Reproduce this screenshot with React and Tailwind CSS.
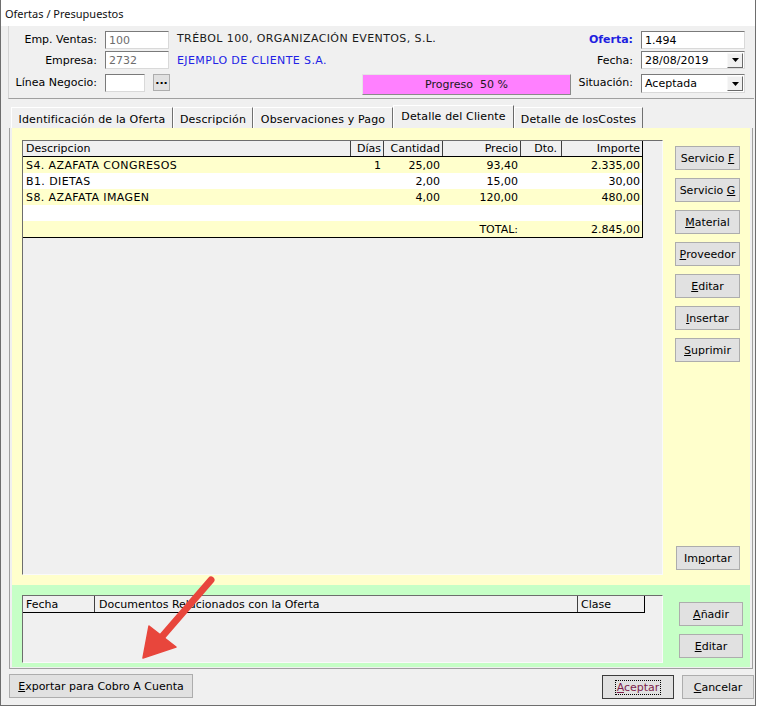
import React from "react";

const Btn = ({ className = "", children }) => (
  <div className={`shrink-0 flex items-center justify-center bg-[#e1e1e1] border border-[#adadad] text-black whitespace-nowrap ${className}`}>
    {children}
  </div>
);

const Field = ({ className = "", children }) => (
  <div className={`shrink-0 bg-white border border-t-[#7a7a7a] border-l-[#7a7a7a] border-r-[#d9d9d9] border-b-[#d9d9d9] flex items-center pl-[3px] ${className}`}>
    {children}
  </div>
);

const Combo = ({ className = "", value }) => (
  <div className={`shrink-0 bg-white border border-t-[#7a7a7a] border-l-[#7a7a7a] border-r-[#d9d9d9] border-b-[#d9d9d9] flex items-center ${className}`}>
    <span className="flex-1 pl-[3px]">{value}</span>
    <div className="w-[16px] h-[15px] mr-[1px] bg-[#f0f0f0] border border-t-[#f8f8f8] border-l-[#f8f8f8] border-r-[#696969] border-b-[#696969] flex items-center justify-center">
      <svg width="7" height="4" viewBox="0 0 7 4">
        <polygon points="0,0 7,0 3.5,4" fill="#000" />
      </svg>
    </div>
  </div>
);

const rows = [
  { d: "S4. AZAFATA CONGRESOS", dias: "1", cant: "25,00", precio: "93,40", imp: "2.335,00" },
  { d: "B1. DIETAS", cant: "2,00", precio: "15,00", imp: "30,00" },
  { d: "S8. AZAFATA IMAGEN", cant: "4,00", precio: "120,00", imp: "480,00" },
  {},
  { precio: "TOTAL:", imp: "2.845,00" },
];

export default function App() {
  return (
    <div className="relative w-[760px] h-[708px] bg-white overflow-hidden font-['DejaVu_Sans',sans-serif] text-[11px] leading-none text-black">
      <div className="w-[756px] h-[706px] flex flex-col border-l border-r border-b border-[#6e6e6e] bg-[#f0f0f0]">
        {/* title bar */}
        <div className="h-[26px] shrink-0 bg-white flex items-center pl-[4px] font-['Noto_Sans',sans-serif] text-[11px] text-[#111]">
          Ofertas / Presupuestos
        </div>

        {/* header panel */}
        <div className="h-[73px] shrink-0 ml-[7px] mr-[1px] border-l border-l-[#d4d4d4] border-b border-b-[#a0a0a0] pt-[5px] pr-[9px] flex flex-col">
          <div className="flex items-center h-[18px]">
            <span className="shrink-0 w-[88px] text-right pb-[2px]">Emp. Ventas:</span>
            <Field className="ml-[8px] w-[64px] h-[18px] text-[#6d6d6d]">100</Field>
            <span className="shrink-0 ml-[8px] text-[#1a1a1a] tracking-[0.4px] pb-[3px]">TRÉBOL 100, ORGANIZACIÓN EVENTOS, S.L.</span>
            <div className="ml-auto flex items-center shrink-0">
              <span className="w-[60px] text-right font-bold text-[#1f1fe0] pb-[2px]">Oferta:</span>
              <Field className="ml-[8px] w-[104px] h-[18px]">1.494</Field>
            </div>
          </div>
          <div className="flex items-center h-[18px] mt-[2px]">
            <span className="shrink-0 w-[88px] text-right">Empresa:</span>
            <Field className="ml-[8px] w-[64px] h-[18px] text-[#6d6d6d]">2732</Field>
            <span className="shrink-0 ml-[8px] text-[#2222e6] tracking-[0.4px]">EJEMPLO DE CLIENTE S.A.</span>
            <div className="ml-auto flex items-center shrink-0">
              <span className="w-[60px] text-right">Fecha:</span>
              <Combo className="ml-[8px] w-[104px] h-[18px]" value="28/08/2019" />
            </div>
          </div>
          <div className="flex items-start h-[21px] mt-[5px]">
            <span className="shrink-0 w-[88px] h-[17px] flex items-center justify-end">Línea Negocio:</span>
            <Field className="ml-[8px] w-[40px] h-[18px]"></Field>
            <Btn className="ml-[8px] w-[17px] h-[17px] font-bold pb-[4px]">...</Btn>
            <div className="shrink-0 ml-[192px] w-[209px] h-[21px] bg-[#ff80ff] border border-t-[#e4e4e4] border-l-[#e4e4e4] border-r-[#8a8a8a] border-b-[#8a8a8a] flex items-center justify-center whitespace-pre text-[#1a1a1a]">
              Progreso  50 %
            </div>
            <div className="ml-auto flex items-start shrink-0">
              <span className="w-[60px] h-[17px] flex items-center justify-end">Situación:</span>
              <Combo className="ml-[8px] w-[104px] h-[19px]" value="Aceptada" />
            </div>
          </div>
        </div>

        {/* tabs */}
        <div className="h-[23px] mt-[6px] ml-[10px] flex items-end shrink-0 tracking-[0.15px]">
          <div className="w-[162px] h-[21px] flex items-center justify-center pt-[2px] border-t border-l border-r border-t-white border-l-white border-r-[#707070]">Identificación de la Oferta</div>
          <div className="w-[80px] h-[21px] flex items-center justify-center pt-[2px] border-t border-l border-r border-t-white border-l-white border-r-[#707070]">Descripción</div>
          <div className="w-[140px] h-[21px] flex items-center justify-center pt-[2px] border-t border-l border-r border-t-white border-l-white border-r-[#707070]">Observaciones y Pago</div>
          <div className="w-[121px] h-[23px] flex items-center justify-center pb-[1px] border-t border-l border-r border-t-white border-l-white border-r-[#696969] bg-[#f0f0f0]">Detalle del Cliente</div>
          <div className="w-[129px] h-[21px] flex items-center justify-center pt-[2px] border-t border-l border-r border-t-white border-l-white border-r-[#707070]">Detalle de losCostes</div>
        </div>

        {/* tab frame */}
        <div className="ml-[8px] w-[744px] h-[541px] shrink-0 border-l border-r border-b border-[#a0a0a0] px-[2px] pb-[1px] flex flex-col">
          {/* yellow */}
          <div className="h-[457px] bg-[#ffffcc] flex pl-[10px] pt-[12px]">
            <div className="w-[641px] h-[435px] bg-[#f0f0f0] border border-t-[#6d6d6d] border-l-[#6d6d6d] border-r-[#fafafa] border-b-[#fafafa]">
              <div className="w-[620px]">
                <div className="flex h-[16px] border-b border-black">
                  <div className="w-[328px] border-r border-[#404040] pl-[3px] flex items-center">Descripcion</div>
                  <div className="w-[33px] border-r border-[#404040] pr-[2px] flex items-center justify-end">Días</div>
                  <div className="w-[59px] border-r border-[#404040] pr-[2px] flex items-center justify-end">Cantidad</div>
                  <div className="w-[78px] border-r border-[#404040] pr-[2px] flex items-center justify-end">Precio</div>
                  <div className="w-[41px] border-r border-[#404040] pr-[4px] flex items-center justify-end">Dto.</div>
                  <div className="w-[81px] border-r border-black pr-[2px] flex items-center justify-end">Importe</div>
                </div>
                <div className="border-r border-b border-black">
                  {rows.map((r, i) => (
                    <div key={i} className={`flex h-[16px] ${i % 2 === 0 ? "bg-[#ffffcc]" : "bg-white"}`}>
                      <div className="w-[328px] pl-[3px] flex items-center tracking-[0.4px]">{r.d || ""}</div>
                      <div className="w-[33px] pr-[3px] flex items-center justify-end">{r.dias || ""}</div>
                      <div className="w-[59px] pr-[3px] flex items-center justify-end">{r.cant || ""}</div>
                      <div className="w-[78px] pr-[3px] flex items-center justify-end">{r.precio || ""}</div>
                      <div className="w-[41px] pr-[3px] flex items-center justify-end"></div>
                      <div className="w-[80px] pr-[2px] flex items-center justify-end">{r.imp || ""}</div>
                    </div>
                  ))}
                </div>
              </div>
            </div>
            <div className="ml-[12px] w-[65px] h-[435px] flex flex-col justify-between pt-[6px] pb-[5px]">
              <div className="flex flex-col gap-[8px]">
                <Btn className="h-[24px]">Servicio&nbsp;<u>F</u></Btn>
                <Btn className="h-[24px]">Servicio&nbsp;<u>G</u></Btn>
                <Btn className="h-[24px]"><u>M</u>aterial</Btn>
                <Btn className="h-[24px]"><u>P</u>roveedor</Btn>
                <Btn className="h-[24px]"><u>E</u>ditar</Btn>
                <Btn className="h-[24px]"><u>I</u>nsertar</Btn>
                <Btn className="h-[24px]"><u>S</u>uprimir</Btn>
              </div>
              <Btn className="h-[24px] ml-[1px]">Im<u>p</u>ortar</Btn>
            </div>
          </div>
          {/* green */}
          <div className="h-[82px] bg-[#c6ffc6] flex pl-[10px] pt-[10px]">
            <div className="w-[641px] h-[68px] bg-[#f0f0f0] border border-t-[#6d6d6d] border-l-[#6d6d6d] border-r-[#fafafa] border-b-[#fafafa]">
              <div className="flex w-[622px] h-[17px] border-b border-black">
                <div className="w-[72px] border-r border-[#404040] pl-[3px] flex items-center">Fecha</div>
                <div className="w-[483px] border-r border-[#404040] pl-[4px] flex items-center">Documentos Relacionados con la Oferta</div>
                <div className="w-[67px] border-r border-black pl-[3px] flex items-center">Clase</div>
              </div>
            </div>
            <div className="ml-[16px] w-[64px] flex flex-col gap-[8px] pt-[7px]">
              <Btn className="h-[24px]"><u>A</u>ñadir</Btn>
              <Btn className="h-[24px]"><u>E</u>ditar</Btn>
            </div>
          </div>
        </div>

        {/* bottom bar */}
        <div className="h-[36px] shrink-0 flex items-start">
          <Btn className="ml-[8px] mt-[5px] w-[184px] h-[24px]"><u>E</u>xportar para Cobro A Cuenta</Btn>
          <div className="ml-auto mr-[1px] mt-[6px] flex">
            <div className="w-[72px] h-[24px] bg-[#e1e1e1] border border-[#3c3c3c] flex items-center justify-center">
              <span className="border border-dotted border-black px-[1px] py-[1px] text-[#7d1f4c]"><u>A</u>ceptar</span>
            </div>
            <Btn className="ml-[8px] w-[72px] h-[24px]"><u>C</u>ancelar</Btn>
          </div>
        </div>
      </div>

      {/* red arrow annotation */}
      <svg className="absolute left-0 top-0 pointer-events-none" width="760" height="708" viewBox="0 0 760 708">
        <line x1="211" y1="580" x2="160" y2="639" stroke="#e8463c" strokeWidth="7" strokeLinecap="round" />
        <polygon points="143,658 149,626 176,647" fill="#e8463c" stroke="#e8463c" strokeWidth="1.5" strokeLinejoin="round" />
      </svg>
    </div>
  );
}
